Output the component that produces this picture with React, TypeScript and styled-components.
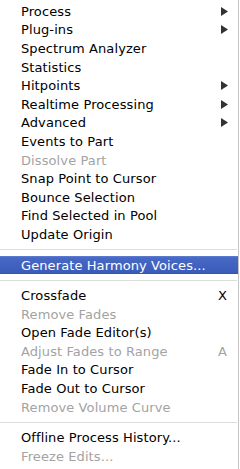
import React from "react";
import styled, { createGlobalStyle } from "styled-components";

const GlobalStyle = createGlobalStyle`
  html, body {
    margin: 0;
    padding: 0;
    background: #fff;
  }
  body {
    font-family: "DejaVu Sans", "Liberation Sans", sans-serif;
  }
`;

type Entry =
  | { kind: "item"; label: string; disabled?: boolean; submenu?: boolean; shortcut?: string; active?: boolean }
  | { kind: "sep" };

const entries: Entry[] = [
  { kind: "item", label: "Process", submenu: true },
  { kind: "item", label: "Plug-ins", submenu: true },
  { kind: "item", label: "Spectrum Analyzer" },
  { kind: "item", label: "Statistics" },
  { kind: "item", label: "Hitpoints", submenu: true },
  { kind: "item", label: "Realtime Processing", submenu: true },
  { kind: "item", label: "Advanced", submenu: true },
  { kind: "item", label: "Events to Part" },
  { kind: "item", label: "Dissolve Part", disabled: true },
  { kind: "item", label: "Snap Point to Cursor" },
  { kind: "item", label: "Bounce Selection" },
  { kind: "item", label: "Find Selected in Pool" },
  { kind: "item", label: "Update Origin" },
  { kind: "sep" },
  { kind: "item", label: "Generate Harmony Voices...", active: true },
  { kind: "sep" },
  { kind: "item", label: "Crossfade", shortcut: "X" },
  { kind: "item", label: "Remove Fades", disabled: true },
  { kind: "item", label: "Open Fade Editor(s)" },
  { kind: "item", label: "Adjust Fades to Range", disabled: true, shortcut: "A" },
  { kind: "item", label: "Fade In to Cursor" },
  { kind: "item", label: "Fade Out to Cursor" },
  { kind: "item", label: "Remove Volume Curve", disabled: true },
  { kind: "sep" },
  { kind: "item", label: "Offline Process History..." },
  { kind: "item", label: "Freeze Edits...", disabled: true },
];

const Menu = styled.div`
  width: 239px;
  height: 469px;
  box-sizing: border-box;
  padding-top: 2px;
  background: #fff;
  border-right: 1px solid #c4c4c4;
  display: flex;
  flex-direction: column;
`;

const Row = styled.div<{ $disabled?: boolean; $active?: boolean }>`
  height: 18.6px;
  display: flex;
  align-items: center;
  padding: 0 10px 0 21px;
  font-size: 13px;
  letter-spacing: 0.1px;
  color: ${(p) => (p.$active ? "#fff" : p.$disabled ? "#a3a3a3" : "#000")};
  background: ${(p) =>
    p.$active ? "linear-gradient(#6080d4, #4868c4 10%, #3c5cbc 90%, #3353b0)" : "transparent"};
  white-space: nowrap;
`;

const Label = styled.span`
  flex: 1;
`;

const Shortcut = styled.span`
  width: 10px;
  text-align: left;
`;

const Arrow = styled.svg`
  width: 7px;
  height: 9px;
`;

const Separator = styled.div`
  height: 12px;
  display: flex;
  align-items: center;
  &::after {
    content: "";
    flex: 1;
    height: 1px;
    margin-right: 1px;
    background: #dcdcdc;
  }
`;

export default function App() {
  return (
    <>
      <GlobalStyle />
      <Menu>
        {entries.map((e, i) =>
          e.kind === "sep" ? (
            <Separator key={i} />
          ) : (
            <Row key={i} $disabled={e.disabled} $active={e.active}>
              <Label>{e.label}</Label>
              {e.shortcut && <Shortcut>{e.shortcut}</Shortcut>}
              {e.submenu && (
                <Arrow viewBox="0 0 7 9">
                  <path d="M0 0 L7 4.5 L0 9 Z" fill="#333" />
                </Arrow>
              )}
            </Row>
          )
        )}
      </Menu>
    </>
  );
}
